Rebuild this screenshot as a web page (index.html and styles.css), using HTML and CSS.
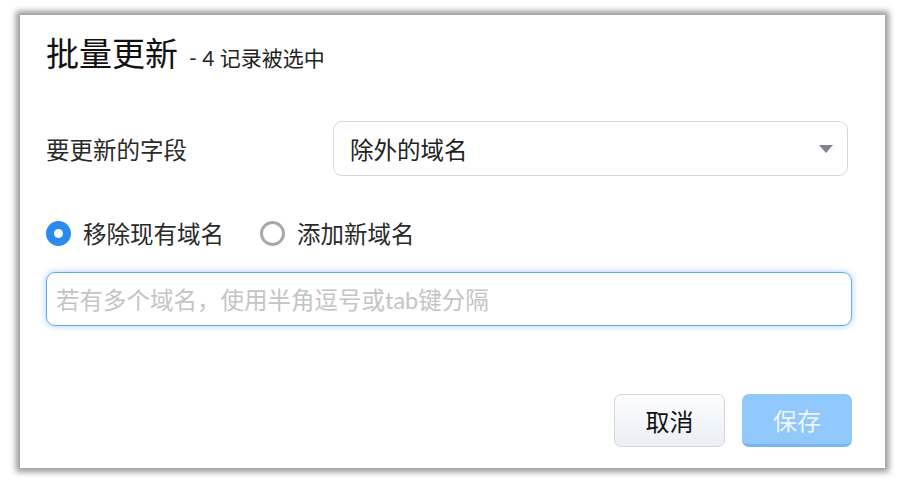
FILE: index.html
```html
<!DOCTYPE html>
<html lang="zh-CN">
<head>
<meta charset="utf-8">
<title>批量更新</title>
<link rel="stylesheet" href="styles.css">
</head>
<body>
<div class="dialog">
  <div class="header">
    <span class="title">批量更新</span>
    <span class="subtitle">- 4 记录被选中</span>
  </div>
  <div class="field-row">
    <span class="label">要更新的字段</span>
    <div class="select">
      <span>除外的域名</span>
      <svg class="caret" width="14" height="8" viewBox="0 0 14 8"><path d="M0 0H14L7 8Z" fill="#7e838e"/></svg>
    </div>
  </div>
  <div class="radio-row">
    <label class="radio-item"><span class="radio checked"></span><span>移除现有域名</span></label>
    <label class="radio-item"><span class="radio"></span><span>添加新域名</span></label>
  </div>
  <div class="text-input"><span class="placeholder">若有多个域名，使用半角逗号或tab键分隔</span></div>
  <div class="actions">
    <button class="btn btn-cancel">取消</button>
    <button class="btn btn-save">保存</button>
  </div>
</div>
</body>
</html>
```
FILE: styles.css
```css
html, body {
  margin: 0;
  padding: 0;
  background: #ffffff;
}
body {
  font-family: Lato, "Noto Sans CJK SC", sans-serif;
  color: #222;
  padding: 15px 20px;
  width: 865px;
}
.dialog {
  box-sizing: border-box;
  width: 865px;
  height: 453px;
  background: #fff;
  box-shadow: 0 0 6px 4px rgba(0, 0, 0, 0.4);
  padding: 18px 33px 0 26px;
}
.header {
  display: flex;
  align-items: baseline;
  height: 40px;
}
.title {
  font-size: 33px;
  line-height: 40px;
  color: #111;
}
.subtitle {
  font-size: 21px;
  line-height: 40px;
  color: #222;
  margin-left: 11px;
}
.field-row {
  display: flex;
  align-items: center;
  margin-top: 48px;
  height: 55px;
}
.label {
  font-size: 23.5px;
  width: 287px;
  color: #2a2a2a;
}
.select {
  box-sizing: border-box;
  width: 515px;
  height: 55px;
  border: 1px solid #d3d7de;
  border-radius: 9px;
  display: flex;
  align-items: center;
  justify-content: space-between;
  padding: 0 14px 0 16px;
  font-size: 23.5px;
  color: #222;
}
.caret {
  display: block;
}
.radio-row {
  display: flex;
  align-items: center;
  gap: 36px;
  margin-top: 42px;
  height: 30px;
}
.radio-item {
  display: flex;
  align-items: center;
  gap: 12px;
  font-size: 23.5px;
  color: #2a2a2a;
}
.radio {
  box-sizing: border-box;
  width: 25px;
  height: 25px;
  border-radius: 50%;
  border: 3px solid #a6a8ae;
  background: #fff;
}
.radio.checked {
  border: 8px solid #2a8bef;
  background: #fff;
}
.text-input {
  box-sizing: border-box;
  margin-top: 24px;
  height: 54px;
  width: 806px;
  border: 1px solid #62a9f3;
  border-radius: 9px;
  box-shadow: 0 0 6px rgba(80, 160, 245, 0.55);
  display: flex;
  align-items: center;
  padding-left: 9px;
}
.placeholder {
  font-size: 23.5px;
  color: #c4c4c4;
}
.actions {
  display: flex;
  justify-content: flex-end;
  gap: 17px;
  margin-top: 68px;
}
.btn {
  box-sizing: border-box;
  height: 53px;
  width: 111px;
  border-radius: 7px;
  font-family: Lato, "Noto Sans CJK SC", sans-serif;
  font-size: 24px;
  padding: 0;
}
.btn-cancel {
  border: 1px solid #d1d5dd;
  background: linear-gradient(#fcfdfe, #eaeef5);
  color: #111;
}
.btn-save {
  width: 110px;
  border: none;
  border-bottom: 3px solid #7ab5ee;
  background: #90c8fb;
  color: #eef6ff;
}
```
